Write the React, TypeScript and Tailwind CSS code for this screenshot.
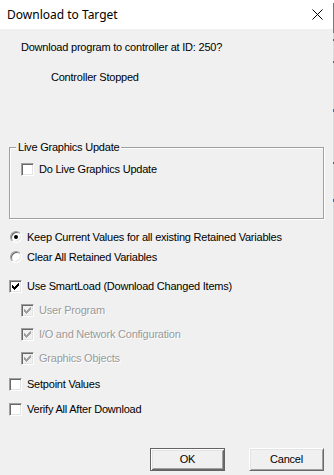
import React from "react";

const boxBase =
  "relative w-[13px] h-[13px] shrink-0 border border-t-[#a0a0a0] border-l-[#a0a0a0] border-r-white border-b-white shadow-[inset_1px_1px_0_#696969,inset_-1px_-1px_0_#e3e3e3]";

function Check({ color }: { color: string }) {
  const cols: [number, number][] = [
    [2, 4],
    [3, 5],
    [4, 6],
    [5, 5],
    [6, 4],
    [7, 3],
    [8, 2],
  ];
  return (
    <svg width="11" height="11" viewBox="0 0 11 11" shapeRendering="crispEdges" className="block">
      {cols.map(([x, y]) => (
        <rect key={x} x={x} y={y} width="1" height="3" fill={color} />
      ))}
    </svg>
  );
}

function CheckBox({
  checked,
  disabled,
  label,
  pl,
}: {
  checked?: boolean;
  disabled?: boolean;
  label: string;
  pl: string;
}) {
  return (
    <div className={`flex items-center h-[14px] ${pl}`}>
      <div className={`${boxBase} ${disabled ? "bg-[#f0f0f0]" : "bg-white"}`}>
        {checked && <Check color={disabled ? "#a0a0a0" : "#000"} />}
      </div>
      <span
        className={`ml-[5px] leading-[14px] whitespace-nowrap ${
          disabled ? "text-[#9a9a9a] [text-shadow:1px_1px_0_#ffffff]" : "text-black"
        }`}
      >
        {label}
      </span>
    </div>
  );
}

function Radio({ checked, label, className }: { checked?: boolean; label: string; className?: string }) {
  return (
    <div className={`flex items-center h-[14px] pl-[10px] ${className ?? ""}`}>
      <div className="w-[12px] h-[12px] shrink-0 rounded-full bg-white border border-t-[#a0a0a0] border-l-[#a0a0a0] border-r-white border-b-white shadow-[inset_1px_1px_0_#696969,inset_-1px_-1px_0_#e3e3e3] flex items-center justify-center">
        {checked && <div className="w-[4px] h-[4px] rounded-full bg-black" />}
      </div>
      <span className="ml-[5px] leading-[14px] whitespace-nowrap">{label}</span>
    </div>
  );
}

export default function App() {
  return (
    <div
      className="w-[334px] h-[475px] flex bg-[#f0f0f0] text-[11px] tracking-[-0.22px] text-black overflow-hidden"
      style={{ fontFamily: '"Liberation Sans", Arial, sans-serif' }}
    >
      <div className="w-[333px] flex flex-col">
        {/* title bar */}
        <div className="h-[29px] bg-white flex items-center pl-[7px] shrink-0">
          <span
            className="text-[12px] tracking-normal text-black"
            style={{ fontFamily: '"Noto Sans", "Open Sans", sans-serif' }}
          >
            Download to Target
          </span>
          <svg
            width="11"
            height="11"
            viewBox="0 0 11 11"
            className="ml-auto mr-[10px]"
            fill="none"
            stroke="#000"
            strokeWidth="1"
          >
            <path d="M0.5 0.5 L10.5 10.5 M10.5 0.5 L0.5 10.5" />
          </svg>
        </div>

        {/* body */}
        <div className="flex flex-col pt-[11px]">
          <div className="h-[14px] leading-[14px] pl-[21px]">Download program to controller at ID: 250?</div>
          <div className="h-[14px] leading-[14px] pl-[51px] mt-[16px]">Controller Stopped</div>

          {/* group box */}
          <div className="relative mt-[63px] ml-[9px] w-[315px] h-[72px] border border-[#a0a0a0] shadow-[inset_1px_1px_0_#ffffff,1px_1px_0_#ffffff] pt-[14px] pl-[11px]">
            <div className="absolute left-[6px] top-[-8px] h-[14px] leading-[14px] px-[2px] bg-[#f0f0f0] whitespace-nowrap">
              Live Graphics Update
            </div>
            <CheckBox label="Do Live Graphics Update" pl="" />
          </div>

          <Radio checked label="Keep Current Values for all existing Retained Variables" className="mt-[11px]" />
          <Radio label="Clear All Retained Variables" className="mt-[6px]" />

          <div className="mt-[15px]">
            <CheckBox checked label="Use SmartLoad (Download Changed Items)" pl="pl-[9px]" />
          </div>
          <div className="mt-[10px]">
            <CheckBox checked disabled label="User Program" pl="pl-[21px]" />
          </div>
          <div className="mt-[10px]">
            <CheckBox checked disabled label="I/O and Network Configuration" pl="pl-[21px]" />
          </div>
          <div className="mt-[10px]">
            <CheckBox checked disabled label="Graphics Objects" pl="pl-[21px]" />
          </div>
          <div className="mt-[12px]">
            <CheckBox label="Setpoint Values" pl="pl-[9px]" />
          </div>
          <div className="mt-[11px]">
            <CheckBox label="Verify All After Download" pl="pl-[9px]" />
          </div>

          {/* buttons */}
          <div className="flex mt-[32px] pl-[150px] gap-[24px]">
            <button className="w-[75px] h-[23px] bg-[#f0f0f0] border border-[#646464] shadow-[inset_1px_1px_0_#ffffff,inset_-1px_-1px_0_#696969,inset_2px_2px_0_#e3e3e3,inset_-2px_-2px_0_#a0a0a0] text-[11px] leading-[21px] text-black">
              OK
            </button>
            <button className="w-[75px] h-[23px] bg-[#f0f0f0] border border-t-white border-l-white border-r-[#696969] border-b-[#696969] shadow-[inset_1px_1px_0_#e3e3e3,inset_-1px_-1px_0_#a0a0a0] text-[11px] leading-[21px] text-black">
              Cancel
            </button>
          </div>
        </div>
      </div>

      {/* right edge strip */}
      <div className="w-[1px] h-[475px] flex flex-col bg-[#dadada]">
        <div className="h-[3px] bg-white" />
        <div className="h-[30px] bg-[#7a7a7a]" />
        <div className="h-[6px]" />
        <div className="h-[2px] bg-[#666666]" />
        <div className="h-[20px]" />
        <div className="h-[2px] bg-[#666666]" />
        <div className="h-[46px]" />
        <div className="h-[3px] bg-[#4a6a8a]" />
        <div className="h-[50px]" />
        <div className="h-[2px] bg-[#666666]" />
        <div className="h-[35px]" />
        <div className="h-[3px] bg-[#4a6a8a]" />
      </div>
    </div>
  );
}
